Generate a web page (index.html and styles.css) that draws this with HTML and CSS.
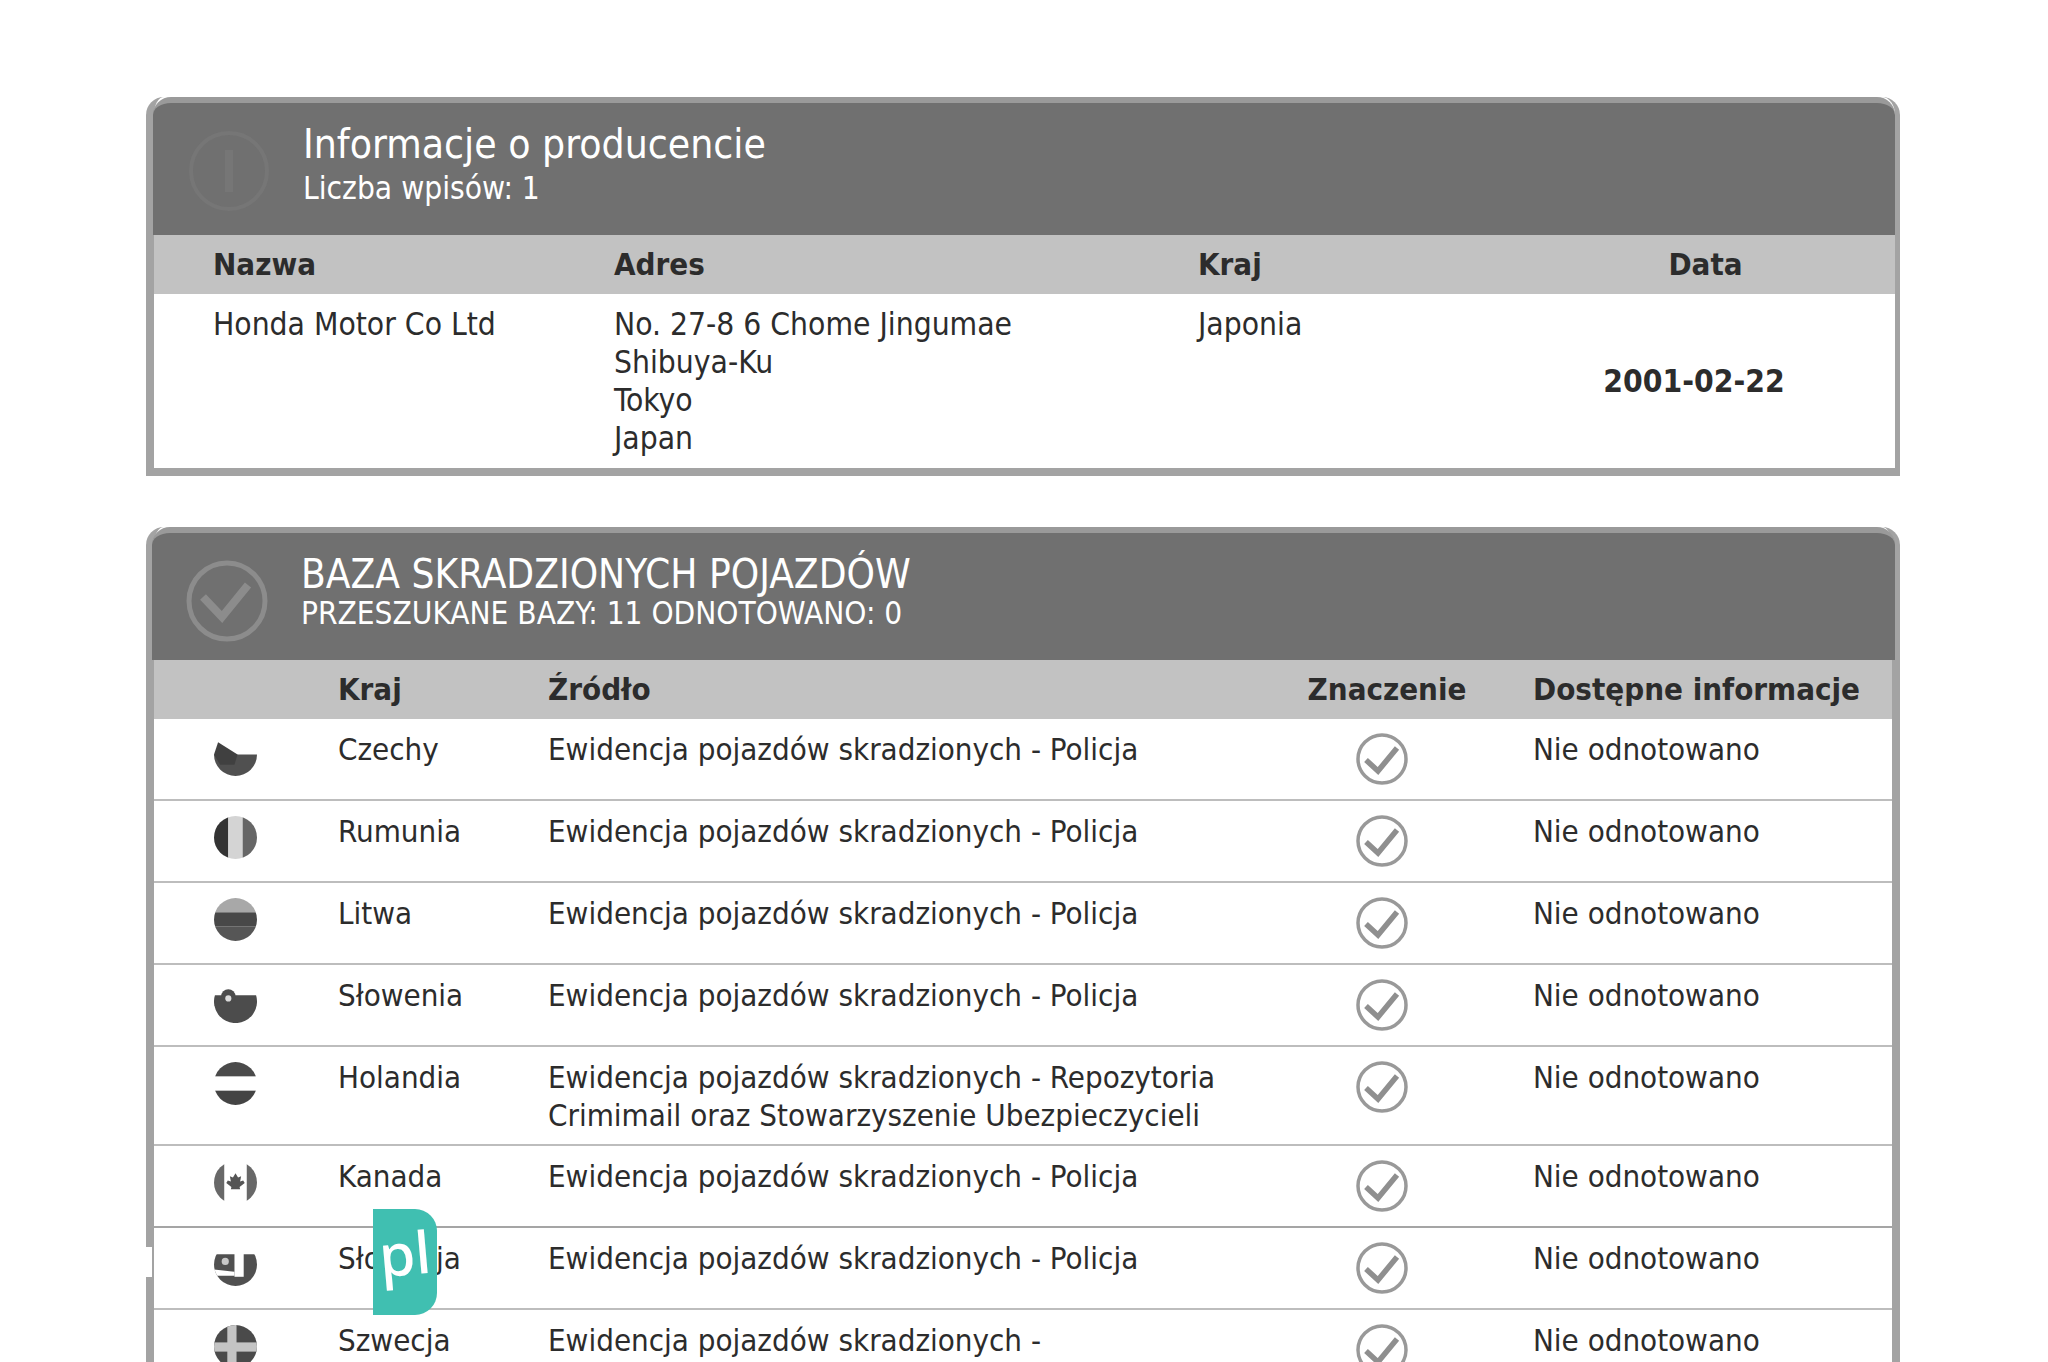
FILE: index.html
```html
<!DOCTYPE html>
<html lang="pl">
<head>
<meta charset="utf-8">
<title>Raport</title>
<link rel="stylesheet" href="styles.css">
</head>
<body>
<main class="page">
  <section class="card card-producer">
    <header class="card-head head-producer">
      <svg class="head-icon" viewBox="0 0 82 82"><circle cx="41" cy="41" r="38" fill="none" stroke="#767676" stroke-width="4"/><rect x="37" y="20" width="8" height="42" fill="#767676"/></svg>
      <div class="head-text">
        <h2 class="head-title">Informacje o producencie</h2>
        <p class="head-sub">Liczba wpisów: 1</p>
      </div>
    </header>
    <div class="producer-grid producer-labels">
      <span>Nazwa</span><span>Adres</span><span>Kraj</span><span class="date-label">Data</span>
    </div>
    <div class="producer-grid producer-row">
      <span>Honda Motor Co Ltd</span>
      <span>No. 27-8 6 Chome Jingumae<br>Shibuya-Ku<br>Tokyo<br>Japan</span>
      <span>Japonia</span>
      <strong class="date-value">2001-02-22</strong>
    </div>
  </section>

  <section class="card card-stolen">
    <header class="card-head head-stolen">
      <svg class="head-icon" viewBox="0 0 82 82"><circle cx="41" cy="41" r="38" fill="none" stroke="#8c8c8c" stroke-width="5"/><path d="M17 37 L36 57 L62 25" fill="none" stroke="#8c8c8c" stroke-width="8"/></svg>
      <div class="head-text">
        <h2 class="head-title">BAZA SKRADZIONYCH POJAZDÓW</h2>
        <p class="head-sub">PRZESZUKANE BAZY: 11 ODNOTOWANO: 0</p>
      </div>
    </header>
    <div class="stolen-grid stolen-labels">
      <span></span><span>Kraj</span><span>Źródło</span><span class="sig-label">Znaczenie</span><span>Dostępne informacje</span>
    </div>

    <div class="stolen-grid stolen-row">
      <svg class="flag" viewBox="0 0 42 42"><path d="M0 20a21 21 0 0 0 42 0z" fill="#505050"/><path d="M4 8 L23 20 L20 30 L6 30 L0 20z" fill="#404040"/></svg>
      <span>Czechy</span><span>Ewidencja pojazdów skradzionych - Policja</span>
      <svg class="check" viewBox="0 0 52 52"><circle cx="26" cy="26" r="24" fill="none" stroke="#999" stroke-width="3.500"/><path d="M10 27 L22 38 L41 15" fill="none" stroke="#8f8f8f" stroke-width="5.500"/></svg>
      <span>Nie odnotowano</span>
    </div>
    <div class="stolen-grid stolen-row">
      <svg class="flag" viewBox="0 0 42 42"><defs><clipPath id="c1"><circle cx="21" cy="21" r="21"/></clipPath></defs><g clip-path="url(#c1)"><rect width="14" height="42" fill="#333"/><rect x="14" width="14" height="42" fill="#d4d4d4"/><rect x="28" width="14" height="42" fill="#666"/></g></svg>
      <span>Rumunia</span><span>Ewidencja pojazdów skradzionych - Policja</span>
      <svg class="check" viewBox="0 0 52 52"><circle cx="26" cy="26" r="24" fill="none" stroke="#999" stroke-width="3.500"/><path d="M10 27 L22 38 L41 15" fill="none" stroke="#8f8f8f" stroke-width="5.500"/></svg>
      <span>Nie odnotowano</span>
    </div>
    <div class="stolen-grid stolen-row">
      <svg class="flag" viewBox="0 0 42 42"><defs><clipPath id="c2"><circle cx="21" cy="21" r="21"/></clipPath></defs><g clip-path="url(#c2)"><rect width="42" height="14" fill="#a8a8a8"/><rect y="14" width="42" height="14" fill="#484848"/><rect y="28" width="42" height="14" fill="#565656"/></g></svg>
      <span>Litwa</span><span>Ewidencja pojazdów skradzionych - Policja</span>
      <svg class="check" viewBox="0 0 52 52"><circle cx="26" cy="26" r="24" fill="none" stroke="#999" stroke-width="3.500"/><path d="M10 27 L22 38 L41 15" fill="none" stroke="#8f8f8f" stroke-width="5.500"/></svg>
      <span>Nie odnotowano</span>
    </div>
    <div class="stolen-grid stolen-row">
      <svg class="flag" viewBox="0 0 42 42"><path d="M0.900 15 H41.100 A21 21 0 1 1 0.900 15z" fill="#4c4c4c"/><circle cx="14" cy="16" r="7" fill="#4c4c4c"/><circle cx="14" cy="18" r="3" fill="#dcdcdc"/></svg>
      <span>Słowenia</span><span>Ewidencja pojazdów skradzionych - Policja</span>
      <svg class="check" viewBox="0 0 52 52"><circle cx="26" cy="26" r="24" fill="none" stroke="#999" stroke-width="3.500"/><path d="M10 27 L22 38 L41 15" fill="none" stroke="#8f8f8f" stroke-width="5.500"/></svg>
      <span>Nie odnotowano</span>
    </div>
    <div class="stolen-grid stolen-row stolen-row-tall">
      <svg class="flag" viewBox="0 0 42 42"><defs><clipPath id="c4"><circle cx="21" cy="21" r="21"/></clipPath></defs><g clip-path="url(#c4)"><rect width="42" height="14" fill="#4a4a4a"/><rect y="28" width="42" height="14" fill="#444"/></g></svg>
      <span>Holandia</span><span>Ewidencja pojazdów skradzionych - Repozytoria<br>Crimimail oraz Stowarzyszenie Ubezpieczycieli</span>
      <svg class="check" viewBox="0 0 52 52"><circle cx="26" cy="26" r="24" fill="none" stroke="#999" stroke-width="3.500"/><path d="M10 27 L22 38 L41 15" fill="none" stroke="#8f8f8f" stroke-width="5.500"/></svg>
      <span>Nie odnotowano</span>
    </div>
    <div class="stolen-grid stolen-row stolen-row-strong">
      <svg class="flag" viewBox="0 0 42 42"><defs><clipPath id="c5"><circle cx="21" cy="21" r="21"/></clipPath></defs><g clip-path="url(#c5)"><rect width="10" height="42" fill="#686868"/><rect x="32" width="10" height="42" fill="#686868"/></g><path d="M21 12 l2.500 4 3-1 -1 5 3-1 1.500 2.500 -5 4 .5 2 h-9 l.5-2 -5-4 1.500-2.500 3 1 -1-5 3 1z" fill="#555"/></svg>
      <span>Kanada</span><span>Ewidencja pojazdów skradzionych - Policja</span>
      <svg class="check" viewBox="0 0 52 52"><circle cx="26" cy="26" r="24" fill="none" stroke="#999" stroke-width="3.500"/><path d="M10 27 L22 38 L41 15" fill="none" stroke="#8f8f8f" stroke-width="5.500"/></svg>
      <span>Nie odnotowano</span>
    </div>
    <div class="stolen-grid stolen-row">
      <svg class="flag" viewBox="0 0 42 42"><defs><clipPath id="c6"><circle cx="21" cy="21" r="21"/></clipPath></defs><g clip-path="url(#c6)"><rect y="11" width="42" height="31" fill="#505050"/><rect x="20" y="9" width="9" height="24" fill="#fff"/><circle cx="11" cy="18" r="3.500" fill="#c8c8c8"/><path d="M0 26 L20 28 V32 H0z" fill="#fff"/></g></svg>
      <span>Słowacja</span><span>Ewidencja pojazdów skradzionych - Policja</span>
      <svg class="check" viewBox="0 0 52 52"><circle cx="26" cy="26" r="24" fill="none" stroke="#999" stroke-width="3.500"/><path d="M10 27 L22 38 L41 15" fill="none" stroke="#8f8f8f" stroke-width="5.500"/></svg>
      <span>Nie odnotowano</span>
    </div>
    <div class="stolen-grid stolen-row">
      <svg class="flag" viewBox="0 0 42 42"><defs><clipPath id="c7"><circle cx="21" cy="21" r="21"/></clipPath></defs><g clip-path="url(#c7)"><rect width="42" height="42" fill="#4a4a4a"/><rect x="13" width="9" height="42" fill="#c4c4c4"/><rect y="17" width="42" height="9" fill="#c4c4c4"/></g></svg>
      <span>Szwecja</span><span>Ewidencja pojazdów skradzionych -</span>
      <svg class="check" viewBox="0 0 52 52"><circle cx="26" cy="26" r="24" fill="none" stroke="#999" stroke-width="3.500"/><path d="M10 27 L22 38 L41 15" fill="none" stroke="#8f8f8f" stroke-width="5.500"/></svg>
      <span>Nie odnotowano</span>
    </div>
  </section>
  <div class="wm-gap"></div>
  <div class="wm-badge"><span class="wm-text">pl</span></div>
</main>
</body>
</html>
```
FILE: styles.css
```css
html, body { margin: 0; padding: 0; background: #fff; }
body { height: 1362px; overflow: hidden; }
.page {
  position: relative;
  height: 1362px;
  overflow: hidden;
  padding: 97px 148px 0 146px;
  box-sizing: border-box;
  font-family: "DejaVu Sans Condensed", "DejaVu Sans", sans-serif;
  font-size: 31px;
  line-height: 38px;
  color: #2c2c2c;
}
.card {
  border: 8px solid #a3a3a3;
  border-top: 0;
  border-radius: 18px 18px 0 0;
  box-sizing: border-box;
}
.card-producer { margin-bottom: 51px; height: 379px; border-right-width: 5px; }
.card-head {
  background: #707070;
  border-top: 6px solid #9a9a9a;
  margin: 0 -3px 0 -1px;
  border-radius: 18px 18px 0 0;
  color: #fff;
  display: flex;
  align-items: flex-start;
  box-sizing: border-box;
}
.head-producer { height: 138px; margin-right: 0; }
.head-stolen { height: 133px; margin-left: -2px; }
.head-icon { width: 82px; height: 82px; flex: none; margin: 27px 0 0 35px; }
.head-stolen .head-icon { margin-left: 34px; }
.head-text { margin-left: 33px; }
.head-producer .head-text { padding-top: 17px; }
.head-producer .head-title { font-size: 40.5px; }
.head-stolen .head-text { padding-top: 16.5px; margin-left: 33px; }
.head-title { margin: 0; font-weight: 400; font-size: 40.2px; line-height: 48px; }
.head-sub { margin: 0; font-size: 31.4px; line-height: 40px; }
.head-stolen .head-sub { line-height: 30px; font-size: 31.3px; }
.producer-grid {
  display: grid;
  grid-template-columns: 401px 584px 1fr 230px;
  padding: 0 86px 0 59px;
  font-size: 31.5px;
}
.producer-labels {
  background: #c2c2c2;
  height: 59px;
  align-items: center;
  font-weight: 700;
  font-size: 31px;
  padding-bottom: 2px;
  box-sizing: border-box;
}
.date-label { text-align: center; padding-left: 23px; }
.producer-row { padding-top: 11px; padding-bottom: 10px; }
.date-value { align-self: center; text-align: center; }
.stolen-grid {
  display: grid;
  grid-template-columns: 184px 210px 715px 270px 1fr;
  box-sizing: border-box;
}
.stolen-labels {
  background: #c2c2c2;
  height: 59px;
  align-items: center;
  font-weight: 700;
  padding-bottom: 2px;
}
.sig-label { text-align: center; padding-right: 22px; }
.stolen-row {
  min-height: 82px;
  padding-top: 11px;
  border-bottom: 2px solid #bdbdbd;
  align-items: start;
}
.stolen-row-tall { height: 99px; }
.stolen-row-strong { border-bottom-color: #a5a5a5; }
.flag { width: 43px; height: 43px; margin: 4px 0 0 60px; }
.check { width: 52px; height: 52px; margin: 3px 0 0 93px; }
.wm-gap {
  position: absolute;
  left: 146px;
  top: 1247px;
  width: 6px;
  height: 30px;
  background: #fff;
}
.wm-badge {
  position: absolute;
  left: 373px;
  top: 1209px;
  width: 64px;
  height: 106px;
  box-sizing: border-box;
  background: #40bfb1;
  border-radius: 0 22px 22px 0;
  color: #fff;
  font-family: "Noto Sans", sans-serif;
  font-size: 58px;
  font-weight: 500;
  line-height: 88px;
  text-align: center;
}
.wm-text { display: inline-block; transform: rotate(-5deg); }
```
